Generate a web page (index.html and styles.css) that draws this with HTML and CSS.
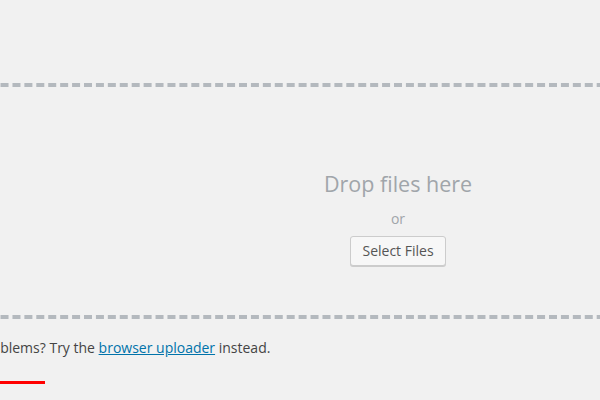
FILE: index.html
```html
<!DOCTYPE html>
<html lang="en">
  <head>
    <meta charset="UTF-8" />
    <meta name="viewport" content="width=device-width, initial-scale=1.0" />
    <title>Upload New Media</title>
    <link rel="stylesheet" href="styles.css">
  </head>
  <body>
    <div class="uploader">
      <div class="drag-drop">
        <div class="drag-drop-inside">
          <p class="drag-drop-info">Drop files here</p>
          <p class="drag-drop-or">or</p>
          <p class="drag-drop-buttons">
            <button type="button" class="button">Select Files</button>
          </p>
        </div>
      </div>

      <p class="upload-flash-bypass">
        Having problems? Try the <a href="#">browser uploader</a> instead.
      </p>

      <div class="upload-progress"></div>
    </div>
  </body>
</html>
```

FILE: styles.css
```css
* {
  margin: 0;
  padding: 0;
  box-sizing: border-box;
}

body {
  font-family: "Open Sans", "Noto Sans", sans-serif;
  font-size: 14px;
  color: #444;
  background-color: #f1f1f1;
  overflow: hidden;
}

.uploader {
  width: 938px;
  margin-left: -71px;
  padding-top: 83px;
}

.drag-drop {
  border: 4px dashed #b4b9be;
  border-left: none;
  border-right: none;
}

.drag-drop-inside {
  padding: 83px 0 49px;
  text-align: center;
}

.drag-drop-info {
  font-size: 21.5px;
  line-height: 28px;
  color: #a0a5aa;
}

.drag-drop-or {
  margin-top: 12px;
  line-height: 18px;
  color: #a0a5aa;
}

.drag-drop-buttons {
  margin-top: 8px;
}

.button {
  font-family: inherit;
  font-size: 14px;
  color: #555;
  height: 30px;
  padding: 0 11px 2px;
  background-color: #f7f7f7;
  border: 1px solid #ccc;
  border-radius: 3px;
  box-shadow: 0 1px 0 #ccc;
  cursor: pointer;
}

.upload-flash-bypass {
  margin-top: 19px;
  line-height: 20px;
}

.upload-flash-bypass a {
  color: #0073aa;
}

.upload-progress {
  width: 116px;
  height: 3px;
  margin-top: 23px;
  background-color: #f00;
}
```
